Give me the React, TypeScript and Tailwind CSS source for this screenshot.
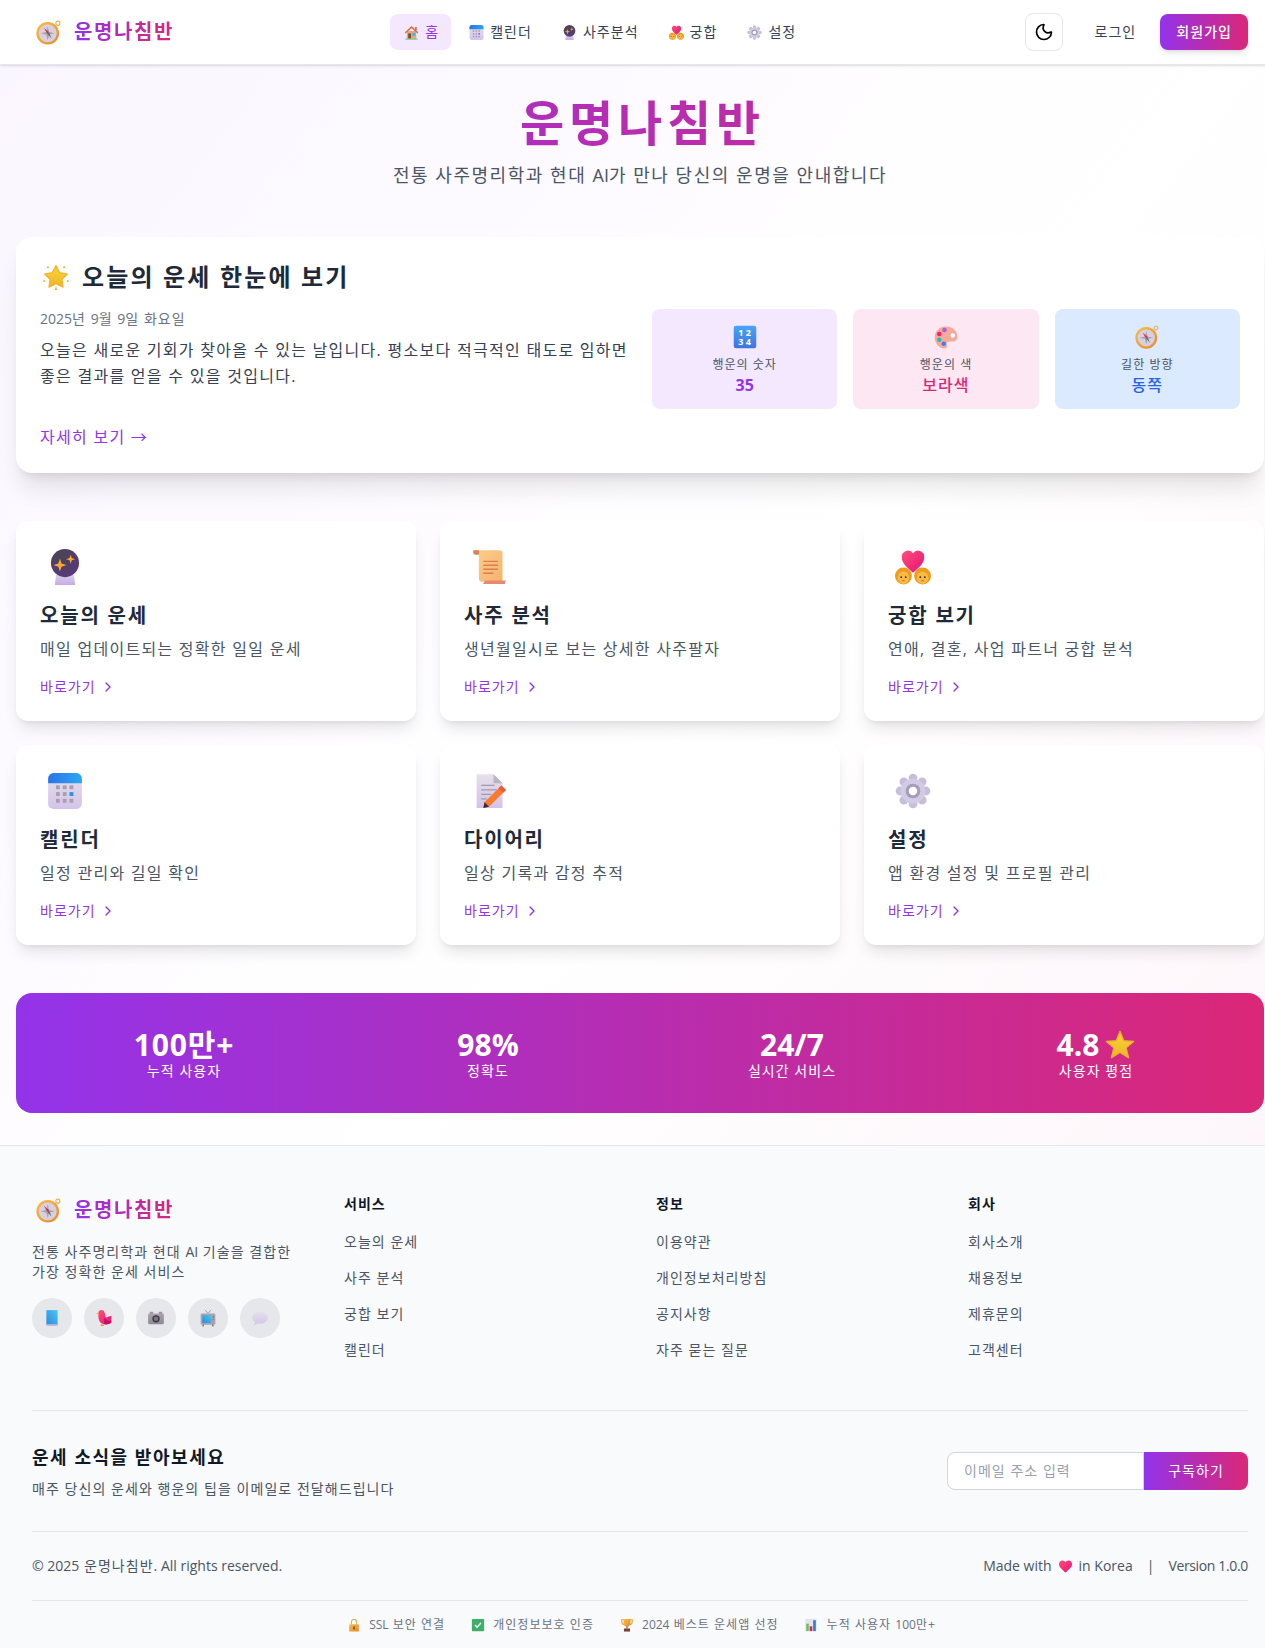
import { ChevronRight, Moon } from "lucide-react";
import type { ReactNode } from "react";

// 이모지는 폰트가 없어서 전부 인라인 SVG로 그림
function Svg({ size, children }: { size: number; children: ReactNode }) {
  return (
    <svg width={size} height={size} viewBox="0 0 32 32" className="shrink-0">
      {children}
    </svg>
  );
}

// 라틴 문자/숫자는 자간 없이
const L = ({ children }: { children: ReactNode }) => <span className="tracking-normal">{children}</span>;

type IconProps = { size: number };

const Compass = ({ size }: IconProps) => (
  <Svg size={size}>
    <circle cx="28" cy="4" r="2.6" fill="none" stroke="#e9a83c" strokeWidth="1.3" />
    <circle cx="15" cy="17" r="14.5" fill="url(#gold)" />
    <circle cx="15" cy="17" r="11.500" fill="#d8d0dc" />
    <path d="M15 8l1.800 7.200 7.200 1.800-7.200 1.800-1.800 7.200-1.800-7.200-7.200-1.800 7.200-1.800z" fill="#a8a2ac" />
    <path d="M10 10l6.500 5.500-2 2z" fill="#e0245e" />
    <path d="M20 24l-5.500-6.500 2-2z" fill="#6b6670" />
  </Svg>
);

const House = ({ size }: IconProps) => (
  <Svg size={size}>
    <rect x="6" y="13" width="20" height="16" fill="#dcaa7c" />
    <path d="M16 2L1.500 16l2 2L16 6.500 28.500 18l2-2z" fill="#e8623a" />
    <path d="M24 4h3v8l-3-3z" fill="#b5533a" />
    <rect x="9" y="18" width="6" height="11" fill="#7a4a34" />
    <rect x="18" y="17" width="6" height="6" fill="#3fb4e8" />
    <rect x="3" y="29" width="26" height="2" fill="#5cb85c" />
  </Svg>
);

const Calendar = ({ size }: IconProps) => {
  const dots = [9, 15, 21];
  return (
    <Svg size={size}>
      <rect x="1" y="0" width="30" height="32" rx="5" fill="url(#lav)" />
      <path d="M1 9V5a5 5 0 015-5h20a5 5 0 015 5v4z" fill="url(#calTop)" />
      {dots.map((y) =>
        dots.map((x) => (
          <rect
            key={`${x}-${y}`}
            x={x - 1}
            y={y + 2}
            width="3.400"
            height="3.400"
            fill={x === 21 && y === 15 ? "#2a8ff0" : "#a79fb0"}
          />
        ))
      )}
    </Svg>
  );
};

const Crystal = ({ size }: IconProps) => (
  <Svg size={size}>
    <path d="M8 23h16l1 9H7z" fill="url(#lavDeep)" />
    <circle cx="16" cy="12.500" r="12.500" fill="url(#ball)" />
    <path d="M11.500 8.500l1.400 4.400 4.400 1.400-4.400 1.400-1.400 4.400-1.400-4.400-4.400-1.400 4.400-1.400z" fill="#f9a63a" />
    <path d="M21 5l1 3 3 1-3 1-1 3-1-3-3-1 3-1z" fill="#f9a63a" />
  </Svg>
);

const Couple = ({ size }: IconProps) => (
  <Svg size={size}>
    <circle cx="7.500" cy="24" r="7.500" fill="#ef9c1c" />
    <circle cx="24.500" cy="24" r="7.500" fill="#ef9c1c" />
    <ellipse cx="7.500" cy="25.500" rx="5" ry="5.500" fill="#f9bb45" />
    <ellipse cx="24.500" cy="25.500" rx="5" ry="5.500" fill="#f9bb45" />
    <circle cx="5.500" cy="25" r=".8" fill="#3b2a20" />
    <circle cx="9.500" cy="25" r=".8" fill="#3b2a20" />
    <circle cx="22.500" cy="25" r=".8" fill="#3b2a20" />
    <circle cx="26.500" cy="25" r=".8" fill="#3b2a20" />
    <path d="M6.500 28.200h2M23.500 28.200h2" stroke="#b4532a" strokeWidth=".8" />
    <path d="M16 21C11 16.500 6 13 6 7a5.500 5.500 0 0110-3.200A5.500 5.500 0 0126 7c0 6-5 9.500-10 14z" fill="url(#heart)" />
  </Svg>
);

const Gear = ({ size }: IconProps) => {
  const angles = [0, 45, 90, 135, 180, 225, 270, 315];
  return (
    <Svg size={size}>
      {angles.map((a) => (
        <circle key={a} cx="16" cy="4.500" r="3.900" fill="#c6bedb" transform={`rotate(${a} 16 16)`} />
      ))}
      <circle cx="16" cy="16" r="11" fill="#d2cbe3" />
      <circle cx="16" cy="16" r="6.500" fill="#a69db8" />
      <circle cx="16" cy="16" r="3.800" fill="#ffffff" />
    </Svg>
  );
};

const Glow = ({ size }: IconProps) => (
  <Svg size={size}>
    <path d="M16 2l4.600 8.700 9.400 1.600-6.700 6.700 1.400 9.500-8.700-4.300-8.700 4.300 1.400-9.500-6.700-6.700 9.400-1.600z" fill="url(#star)" stroke="#f0b428" strokeWidth="1.500" strokeLinejoin="round" />
    <circle cx="6" cy="4" r="1.300" fill="#f0b428" />
    <circle cx="26" cy="4" r="1.300" fill="#f0b428" />
    <circle cx="1.500" cy="21" r="1.200" fill="#f0b428" />
    <circle cx="30.500" cy="21" r="1.200" fill="#f0b428" />
    <path d="M16 27l1.500 5h-3z" fill="#f0b428" />
  </Svg>
);

const Numbers = ({ size }: IconProps) => (
  <Svg size={size}>
    <rect x="1" y="1" width="30" height="30" rx="3" fill="url(#blue)" />
    <text x="17" y="14" textAnchor="middle" fontSize="12" fontWeight="700" fill="#fff" fontFamily="Open Sans" letterSpacing="3">12</text>
    <text x="17" y="27" textAnchor="middle" fontSize="12" fontWeight="700" fill="#fff" fontFamily="Open Sans" letterSpacing="3">34</text>
  </Svg>
);

const Palette = ({ size }: IconProps) => (
  <Svg size={size}>
    <path d="M16 2C7 2 1 8.500 1 16.500S7 31 14 31c4 0 3.500-3 3-5-.5-2.500 1-4 4-4h4c4 0 6-2.500 6-6.500C31 8 25 2 16 2z" fill="#f5a99a" />
    <circle cx="25" cy="14" r="3" fill="#fff" />
    <circle cx="14" cy="6.500" r="3" fill="#b25ae0" />
    <circle cx="7" cy="12" r="3" fill="#f0246e" />
    <circle cx="7" cy="19.500" r="3" fill="#2fb8b0" />
    <circle cx="13" cy="25" r="3" fill="#3a80ec" />
  </Svg>
);

const Scroll = ({ size }: IconProps) => (
  <Svg size={size}>
    <path d="M3 1h22a3 3 0 013 3v25H10a3 3 0 01-3-3V5z" fill="url(#scroll)" />
    <path d="M2 1h5v4H4a2 2 0 01-2-2z" fill="#d9805a" />
    <path d="M10 31h20l1-3H12c0 2-1 3-2 3z" fill="#e58a6e" />
    <path d="M11 11h13M11 14.500h13M11 18h13M11 21.500h9" stroke="#d9804e" strokeWidth="1.300" />
  </Svg>
);

const Memo = ({ size }: IconProps) => (
  <Svg size={size}>
    <path d="M5 1h15l8 8v22H5z" fill="url(#lav)" />
    <path d="M20 1l8 8h-8z" fill="#bbb2c6" />
    <path d="M9 11h12M9 15h14M9 19h9M9 23h5" stroke="#a19aa8" strokeWidth="1.200" />
    <path d="M27 11l4 4-15 15-5 1 1-5z" fill="#f77b2c" />
    <path d="M27 11l4 4-2.500 2.500-4-4z" fill="#f4553f" />
    <path d="M12 26l-1 5 5-1z" fill="#3f2a3a" />
  </Svg>
);

const Star = ({ size }: IconProps) => (
  <Svg size={size}>
    <path d="M16 1.500l4 10 10.500.8-8 6.700 2.600 10.500-9.100-5.600-9.100 5.600L9.500 19l-8-6.700 10.500-.8z" fill="url(#star)" stroke="#e8b428" strokeWidth="1.500" strokeLinejoin="round" />
  </Svg>
);

const Book = ({ size }: IconProps) => (
  <Svg size={size}>
    <path d="M6 2h20v26H6z" fill="url(#blue2)" />
    <rect x="6" y="27" width="20" height="3" fill="#b9b3e0" />
  </Svg>
);

const Bird = ({ size }: IconProps) => (
  <Svg size={size}>
    <path d="M6 6c1-5 9-6 11 0l2 9 10-3v12c-3 3-8 4-13 3C9 26 6 20 6 13z" fill="url(#heart)" />
    <path d="M17 14c2 5 6 8 12 8v2c-3 3-9 4-13 2z" fill="#c80f5e" />
    <path d="M2 8l5-2v4z" fill="#e8a23c" />
    <path d="M11 27h4l1.500 3h-7z" fill="#e8a23c" />
  </Svg>
);

const Camera = ({ size }: IconProps) => (
  <Svg size={size}>
    <rect x="5" y="5" width="6" height="4" fill="#9a939e" />
    <rect x="21" y="5" width="6" height="4" fill="#9a939e" />
    <rect x="2" y="8" width="28" height="19" rx="2" fill="url(#gray)" />
    <circle cx="16" cy="17.500" r="6.500" fill="#3b3840" />
    <circle cx="16" cy="17.500" r="4" fill="#7a7580" />
  </Svg>
);

const Tv = ({ size }: IconProps) => (
  <Svg size={size}>
    <path d="M16 8L11 2M16 8l5-6" stroke="#8f8896" strokeWidth="1.300" />
    <path d="M8 27l-1 4M24 27l1 4" stroke="#4a4550" strokeWidth="2" />
    <rect x="3" y="8" width="26" height="20" rx="2" fill="#a9a3ae" />
    <rect x="6" y="11" width="16" height="14" fill="url(#blue2)" />
    <circle cx="25.500" cy="14" r="1.300" fill="#e0245e" />
    <rect x="24" y="18" width="3" height="1" fill="#6b6670" />
  </Svg>
);

const Speech = ({ size }: IconProps) => (
  <Svg size={size}>
    <path d="M16 5c8 0 14 4.500 14 10.500S24 26 16 26c-1.500 0-3-.2-4-.5L6 29l1-6c-3-2-5-4.500-5-7.500C2 9.500 8 5 16 5z" fill="url(#lav)" />
  </Svg>
);

const Lock = ({ size }: IconProps) => (
  <Svg size={size}>
    <path d="M10 15V9a6 6 0 0112 0v6" fill="none" stroke="#d9b26a" strokeWidth="2.600" />
    <rect x="5" y="14" width="22" height="17" rx="2" fill="url(#gold)" />
    <rect x="14.500" y="19" width="3" height="7" rx="1.500" fill="#5a3a20" />
  </Svg>
);

const Check = ({ size }: IconProps) => (
  <Svg size={size}>
    <rect x="2" y="2" width="28" height="28" rx="2" fill="#3fae6a" />
    <path d="M9 16l5 5 9-10" fill="none" stroke="#fff" strokeWidth="3" />
  </Svg>
);

const Trophy = ({ size }: IconProps) => (
  <Svg size={size}>
    <path d="M4 4h24v4c0 4-3 7-6 7H10c-3 0-6-3-6-7z" fill="none" stroke="#e8a23c" strokeWidth="2.500" />
    <path d="M8 2h16v10c0 5-4 8-8 8s-8-3-8-8z" fill="url(#gold)" />
    <rect x="14" y="19" width="4" height="5" fill="#c9802c" />
    <rect x="9" y="24" width="14" height="7" fill="#7a3f3a" />
  </Svg>
);

const Chart = ({ size }: IconProps) => (
  <Svg size={size}>
    <rect x="3" y="2" width="26" height="28" fill="#e6e2ea" />
    <rect x="5" y="13" width="6" height="17" fill="#6cc06c" />
    <rect x="13" y="19" width="6" height="11" fill="#e0245e" />
    <rect x="21" y="5" width="6" height="25" fill="#2a7fd8" />
  </Svg>
);

const Heart = ({ size }: IconProps) => (
  <Svg size={size}>
    <path d="M16 29C10 23 2 18 2 10.500A7.500 7.500 0 0116 7a7.500 7.500 0 0114 3.500C30 18 22 23 16 29z" fill="url(#heart)" />
  </Svg>
);

const navItems = [
  { Icon: House, label: "홈", active: true },
  { Icon: Calendar, label: "캘린더" },
  { Icon: Crystal, label: "사주분석" },
  { Icon: Couple, label: "궁합" },
  { Icon: Gear, label: "설정" },
];

const features = [
  { Icon: Crystal, title: "오늘의 운세", desc: "매일 업데이트되는 정확한 일일 운세" },
  { Icon: Scroll, title: "사주 분석", desc: "생년월일시로 보는 상세한 사주팔자" },
  { Icon: Couple, title: "궁합 보기", desc: "연애, 결혼, 사업 파트너 궁합 분석" },
  { Icon: Calendar, title: "캘린더", desc: "일정 관리와 길일 확인" },
  { Icon: Memo, title: "다이어리", desc: "일상 기록과 감정 추적" },
  { Icon: Gear, title: "설정", desc: "앱 환경 설정 및 프로필 관리" },
];

const footerCols = [
  { title: "서비스", links: ["오늘의 운세", "사주 분석", "궁합 보기", "캘린더"] },
  { title: "정보", links: ["이용약관", "개인정보처리방침", "공지사항", "자주 묻는 질문"] },
  { title: "회사", links: ["회사소개", "채용정보", "제휴문의", "고객센터"] },
];

const socials = [Book, Bird, Camera, Tv, Speech];

const trust = [
  { Icon: Lock, label: <><L>SSL</L> 보안 연결</>, key: "ssl" },
  { Icon: Check, label: "개인정보보호 인증", key: "privacy" },
  { Icon: Trophy, label: <><L>2024</L> 베스트 운세앱 선정</>, key: "best" },
  { Icon: Chart, label: <>누적 사용자 <L>100</L>만<L>+</L></>, key: "users" },
];

const gradient = "bg-linear-to-r/srgb from-[#9333ea] to-[#db2777]";

function Logo() {
  return (
    <div className="flex items-center gap-2.5 h-8">
      <div className="w-8 flex justify-center">
        <Compass size={25} />
      </div>
      <span className={`text-xl font-bold tracking-[0.08em] bg-clip-text text-transparent ${gradient}`}>
        운명나침반
      </span>
    </div>
  );
}

function MiniCard({ icon, label, value, className, valueClass }: { icon: ReactNode; label: string; value: ReactNode; className: string; valueClass: string }) {
  return (
    <div className={`rounded-lg p-3 text-center ${className}`}>
      <div className="h-8 mb-1 flex items-center justify-center">{icon}</div>
      <div className="text-xs leading-4 text-gray-600">{label}</div>
      <div className={`text-base leading-6 ${valueClass}`}>{value}</div>
    </div>
  );
}

export default function App() {
  return (
    <div className="w-full overflow-hidden">
      <div className="w-[1280px] bg-linear-to-br/srgb from-[#faf5ff] via-white to-[#fdf2f8] font-['Open_Sans','Noto_Sans_CJK_KR',sans-serif] tracking-[0.065em]">
        <svg className="absolute w-0 h-0" aria-hidden="true">
          <defs>
            <linearGradient id="gold" x1="0" y1="0" x2="1" y2="1">
              <stop offset="0" stopColor="#f7c04a" />
              <stop offset="1" stopColor="#e8862c" />
            </linearGradient>
            <linearGradient id="lav" x1="0" y1="0" x2="0" y2="1">
              <stop offset="0" stopColor="#e6e0ea" />
              <stop offset="1" stopColor="#d3c3ea" />
            </linearGradient>
            <linearGradient id="lavDeep" x1="0" y1="0" x2="0" y2="1">
              <stop offset="0" stopColor="#d9d2e2" />
              <stop offset="1" stopColor="#c9a8ee" />
            </linearGradient>
            <linearGradient id="calTop" x1="0" y1="0" x2="1" y2="0">
              <stop offset="0" stopColor="#2a74ea" />
              <stop offset="1" stopColor="#2aa8f2" />
            </linearGradient>
            <radialGradient id="ball" cx="0.35" cy="0.3" r="0.8">
              <stop offset="0" stopColor="#4a4552" />
              <stop offset="1" stopColor="#5a3880" />
            </radialGradient>
            <linearGradient id="heart" x1="0" y1="0" x2="1" y2="1">
              <stop offset="0" stopColor="#ff4f78" />
              <stop offset="1" stopColor="#e8107a" />
            </linearGradient>
            <linearGradient id="star" x1="0" y1="0" x2="0" y2="1">
              <stop offset="0" stopColor="#fbd33a" />
              <stop offset="1" stopColor="#eeb52a" />
            </linearGradient>
            <linearGradient id="blue" x1="0" y1="0" x2="0" y2="1">
              <stop offset="0" stopColor="#4aa4f4" />
              <stop offset="1" stopColor="#3d74e0" />
            </linearGradient>
            <linearGradient id="blue2" x1="1" y1="0" x2="0" y2="1">
              <stop offset="0" stopColor="#4cc6f0" />
              <stop offset="1" stopColor="#2a8cdc" />
            </linearGradient>
            <linearGradient id="scroll" x1="0" y1="0" x2="1" y2="1">
              <stop offset="0" stopColor="#fbcf8a" />
              <stop offset="1" stopColor="#f6b26e" />
            </linearGradient>
            <linearGradient id="gray" x1="0" y1="0" x2="0" y2="1">
              <stop offset="0" stopColor="#a9a3ae" />
              <stop offset="1" stopColor="#8f8896" />
            </linearGradient>
          </defs>
        </svg>

        <header className="h-[65px] bg-white border-b border-gray-200 shadow-sm px-8 flex items-center justify-between">
          <Logo />
          <nav className="flex items-center gap-1">
            {navItems.map(({ Icon, label, active }) => (
              <a
                key={label}
                className={`h-9 px-3 rounded-lg flex items-center gap-1 text-sm ${active ? "bg-[#f3e8ff] text-[#9333ea]" : "text-gray-700"}`}
              >
                <span className="w-[19px] flex justify-center">
                  <Icon size={15} />
                </span>
                {label}
              </a>
            ))}
          </nav>
          <div className="flex items-center gap-2">
            <button className="w-[38px] h-[38px] mr-2 rounded-lg border border-gray-200 flex items-center justify-center text-black">
              <Moon size={20} />
            </button>
            <button className="h-9 px-4 text-sm text-gray-700">로그인</button>
            <button className={`h-9 px-4 rounded-lg text-sm font-medium text-white shadow-md ${gradient}`}>
              회원가입
            </button>
          </div>
        </header>

        <main className="px-4 pt-8 pb-8">
          <h1 className={`text-5xl font-bold text-center tracking-[0.1em] pt-0.5 pl-[5px] mb-3.5 bg-clip-text text-transparent ${gradient}`}>
            운명나침반
          </h1>
          <p className="text-lg text-center text-gray-600 mb-12 tracking-[0.085em]">
            전통 사주명리학과 현대 <L>AI</L>가 만나 당신의 운명을 안내합니다
          </p>

          <section className="bg-white rounded-2xl shadow-xl p-6 mb-12">
            <h2 className="text-2xl font-bold text-gray-800 mb-4 flex items-center gap-2.5 tracking-[0.09em]">
              <span className="w-8 flex justify-center">
                <Glow size={26} />
              </span>
              오늘의 운세 한눈에 보기
            </h2>
            <div className="grid grid-cols-2 gap-6">
              <div>
                <p className="text-sm text-gray-500 mb-2">
                  <L>2025</L>년 <L>9</L>월 <L>9</L>일 화요일
                </p>
                <p className="text-gray-700 leading-relaxed tracking-[0.08em]">
                  오늘은 새로운 기회가 찾아올 수 있는 날입니다. 평소보다 적극적인 태도로 임하면 좋은 결과를 얻을 수 있을 것입니다.
                </p>
              </div>
              <div className="grid grid-cols-3 gap-4">
                <MiniCard icon={<Numbers size={24} />} label="행운의 숫자" value={<L>35</L>} className="bg-[#f3e8ff]" valueClass="font-bold text-[#9333ea]" />
                <MiniCard icon={<Palette size={24} />} label="행운의 색" value="보라색" className="bg-[#fce7f3]" valueClass="font-medium text-[#db2777]" />
                <MiniCard icon={<Compass size={24} />} label="길한 방향" value="동쪽" className="bg-[#dbeafe]" valueClass="font-medium text-[#2563eb]" />
              </div>
            </div>
            <a className="block mt-4 text-[#9333ea] tracking-[0.08em]">자세히 보기 →</a>
          </section>

          <section className="grid grid-cols-3 gap-6 mb-12">
            {features.map(({ Icon, title, desc }) => (
              <div key={title} className="bg-white rounded-xl shadow-lg p-6">
                <div className="w-[49px] h-10 mb-4 flex items-end justify-center">
                  <Icon size={36} />
                </div>
                <h3 className="text-xl font-bold text-gray-800 pt-px mb-[7px] tracking-[0.09em]">{title}</h3>
                <p className="text-gray-600 mb-4 tracking-[0.08em]">{desc}</p>
                <a className="flex items-center text-sm text-[#9333ea]">
                  바로가기
                  <ChevronRight size={16} className="ml-1" />
                </a>
              </div>
            ))}
          </section>

          <section className={`rounded-2xl p-8 grid grid-cols-4 gap-8 text-center text-white ${gradient}`}>
            <div>
              <div className="text-3xl leading-8 pt-1 font-bold tracking-[0.03em]">100만+</div>
              <div className="text-sm">누적 사용자</div>
            </div>
            <div>
              <div className="text-3xl leading-8 pt-1 font-bold tracking-normal">98%</div>
              <div className="text-sm">정확도</div>
            </div>
            <div>
              <div className="text-3xl leading-8 pt-1 font-bold tracking-normal">24/7</div>
              <div className="text-sm">실시간 서비스</div>
            </div>
            <div>
              <div className="text-3xl leading-8 pt-1 font-bold tracking-normal flex items-center justify-center gap-1.5">
                4.8 <Star size={30} />
              </div>
              <div className="text-sm">사용자 평점</div>
            </div>
          </section>
        </main>

        <footer className="bg-gray-50 border-t border-gray-200 px-8 pt-12 pb-[15px]">
          <div className="grid grid-cols-4 gap-8 mb-12">
            <div>
              <div className="mb-4">
                <Logo />
              </div>
              <p className="text-sm text-gray-600 mb-4 tracking-[0.075em]">
                전통 사주명리학과 현대 <L>AI</L> 기술을 결합한
                <br />
                가장 정확한 운세 서비스
              </p>
              <div className="flex gap-3">
                {socials.map((Icon, i) => (
                  <a key={i} className="w-10 h-10 rounded-full bg-gray-200 flex items-center justify-center">
                    <Icon size={18} />
                  </a>
                ))}
              </div>
            </div>
            {footerCols.map((col) => (
              <div key={col.title}>
                <h4 className="text-sm font-semibold text-gray-900 mb-4">{col.title}</h4>
                <ul className="space-y-3">
                  {col.links.map((link) => (
                    <li key={link} className="text-sm leading-6 text-gray-600">
                      {link}
                    </li>
                  ))}
                </ul>
              </div>
            ))}
          </div>

          <div className="border-t border-gray-200 py-8 flex items-center justify-between">
            <div>
              <h3 className="text-lg font-semibold text-gray-900 mb-2 tracking-[0.085em]">운세 소식을 받아보세요</h3>
              <p className="text-sm text-gray-600 tracking-[0.075em]">매주 당신의 운세와 행운의 팁을 이메일로 전달해드립니다</p>
            </div>
            <div className="flex">
              <input
                placeholder="이메일 주소 입력"
                className="w-[197px] px-4 py-2 text-sm leading-5 bg-white border border-gray-300 rounded-l-lg placeholder:text-gray-400"
              />
              <button className={`w-[104px] text-sm text-white rounded-r-lg ${gradient}`}>
                구독하기
              </button>
            </div>
          </div>

          <div className="border-t border-gray-200 py-6 flex items-center justify-between text-sm text-gray-600">
            <p>
              <L>© 2025</L> 운명나침반<L>. All rights reserved.</L>
            </p>
            <div className="flex items-center gap-3.5 tracking-normal">
              <span className="flex items-center gap-1.5">
                Made with <Heart size={15} /> in Korea
              </span>
              <span>|</span>
              <span className="tracking-tight">Version 1.0.0</span>
            </div>
          </div>

          <div className="border-t border-gray-200 pt-4 flex items-center justify-center gap-6 text-xs text-gray-500">
            {trust.map(({ Icon, label, key }) => (
              <span key={key} className="flex items-center gap-[7px]">
                <span className="w-[17px] flex justify-center">
                  <Icon size={14} />
                </span>
                <span>{label}</span>
              </span>
            ))}
          </div>
        </footer>
      </div>
    </div>
  );
}
